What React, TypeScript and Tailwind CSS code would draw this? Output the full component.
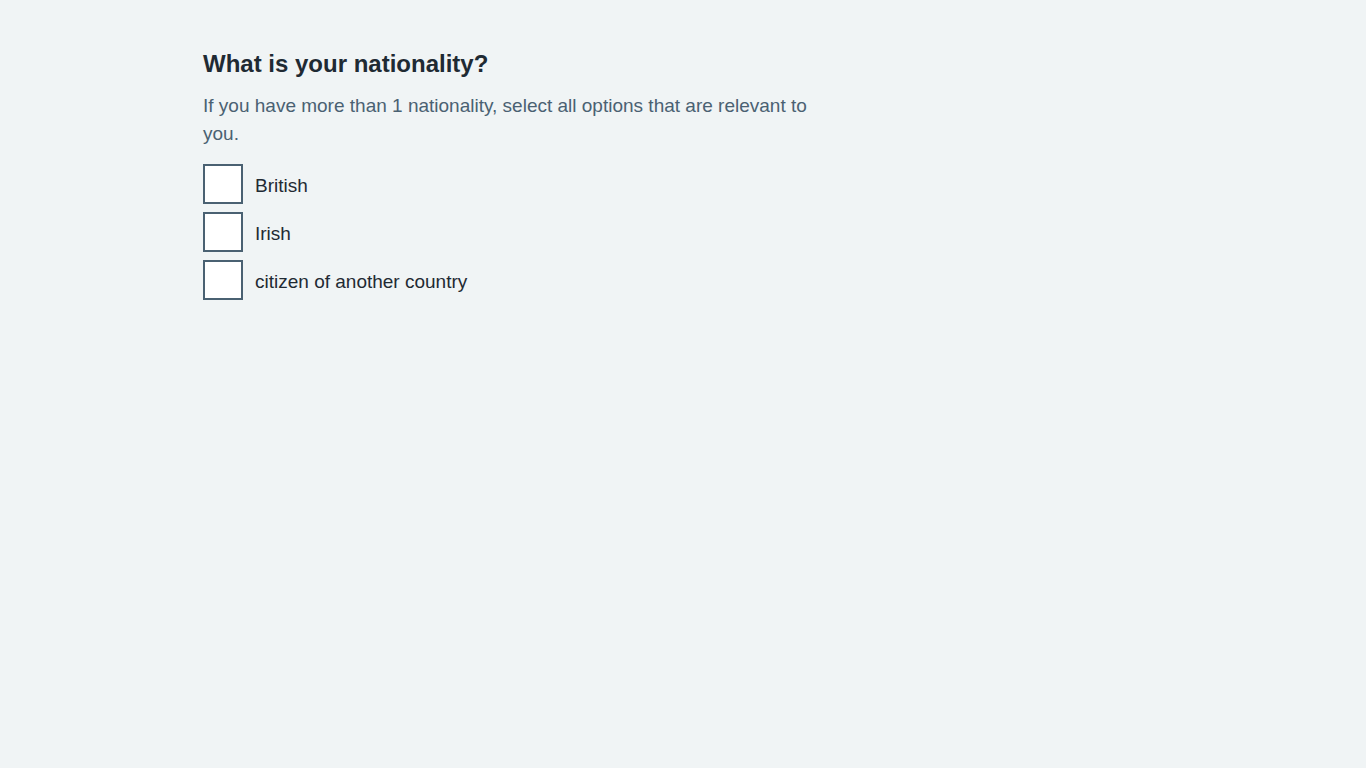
import React from "react";

export default function App() {
  const options = ["British", "Irish", "citizen of another country"];
  return (
    <div className="min-h-screen w-full bg-[#f0f4f5] font-['Liberation_Sans',Arial,sans-serif]">
      <div className="ml-[203px] w-[640px] pt-[49px]">
        <h1 className="text-[24px] leading-[30px] font-bold text-[#1f2a33]">What is your nationality?</h1>
        <p className="mt-[13px] text-[19px] leading-[28px] text-[#4a6172]">
          If you have more than 1 nationality, select all options that are relevant to you.
        </p>
        <div className="mt-[16px] flex flex-col gap-[8px]">
          {options.map((o) => (
            <label key={o} className="flex items-center gap-[12px]">
              <span className="block h-[40px] w-[40px] border-2 border-[#4a6172] bg-white" />
              <span className="text-[19px] leading-[28px] text-[#1f2a33] pt-[3px]">{o}</span>
            </label>
          ))}
        </div>
      </div>
    </div>
  );
}
